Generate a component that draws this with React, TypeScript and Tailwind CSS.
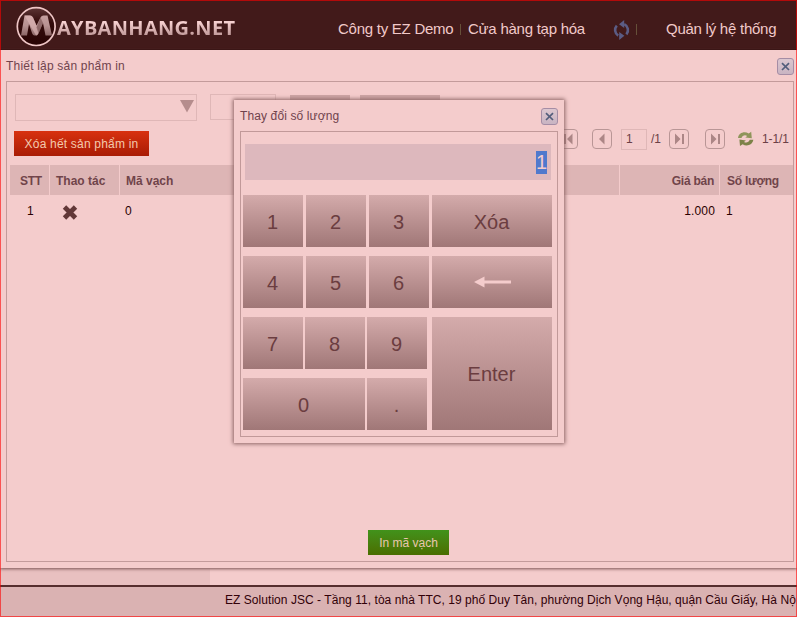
import React from "react";

function CloseButton() {
  return (
    <button className="flex h-[17px] w-[17px] items-center justify-center rounded-[3px] border border-[#a58da5] bg-gradient-to-b from-[#dcc6cf] to-[#c9b4c2]">
      <svg width="9" height="9" viewBox="0 0 9 9">
        <path d="M1 1.200 8 8M8 1.200 1 8" stroke="#535d7b" strokeWidth="1.7" />
      </svg>
    </button>
  );
}

function PagerButton({ kind, className = "" }: { kind: "first" | "prev" | "next" | "last"; className?: string }) {
  return (
    <button className={`flex h-5 w-5 shrink-0 items-center justify-center rounded-[4px] border border-[#b99696] ${className}`}>
      <svg width="18" height="18" viewBox="0 0 18 18" fill="#ac8686">
        {kind === "first" && <path d="M5 4h2v10H5zM8 9l5.500-5.500v11z" />}
        {kind === "prev" && <path d="M6 9l5.500-5.500v11z" />}
        {(kind === "next" || kind === "last") && <path d="M10.500 9 5 3.500v11zM12 4h2v10h-2z" />}
      </svg>
    </button>
  );
}

function Logo() {
  return (
    <div className="flex h-[44px] items-center">
      <svg width="42" height="42" viewBox="0 0 42 42" className="shrink-0">
        <defs>
          <linearGradient id="metal" x1="0" y1="0" x2="0" y2="1">
            <stop offset="0" stopColor="#c49e9e" />
            <stop offset="0.5" stopColor="#b89292" />
            <stop offset="1" stopColor="#8c6666" />
          </linearGradient>
          <linearGradient id="disc" x1="0" y1="0" x2="0" y2="1">
            <stop offset="0" stopColor="#5c3434" />
            <stop offset="0.4" stopColor="#330b0b" />
            <stop offset="1" stopColor="#280303" />
          </linearGradient>
        </defs>
        <circle cx="21.2" cy="20.6" r="18.9" fill="url(#disc)" stroke="#efc6c6" strokeWidth="1.7" />
        <path d="M6 29.500 9.500 9.500h5.500q2 0 3 2l3.500 8 4-8q1-2 3-2h4L37 29.500h-6.500L28 17l-4.500 10.500q-.8 2-2.500 2h-1.500q-1.500 0-2.300-2L14 18l-2 11.500z" fill="url(#metal)" />
        <path d="M9.500 9.500H15q2 0 3 2l6 14-1 2.500q-.8 1.500-2 1.500z" fill="#dbb3b3" opacity="0.65" />
        <path d="M28 17l-4.500 10.500-2-6 4-10z" fill="#765050" opacity="0.6" />
      </svg>
      <span className="mt-[3px] whitespace-nowrap bg-gradient-to-b from-[#f6d0d0] from-30% to-[#c29b9b] to-75% bg-clip-text font-['Open_Sans'] text-[20px] font-bold leading-[28px] tracking-[.3px] text-transparent">
        AYBANHANG.NET
      </span>
    </div>
  );
}

function Header() {
  return (
    <header className="flex h-[50px] shrink-0 items-center border-b border-[#300b0b] bg-[#421a1a] pl-[15px] text-[15px] text-[#f1c9c9]">
      <div className="mt-[4px] w-[323px]"><Logo /></div>
      <nav className="mt-[9px] flex items-center whitespace-nowrap tracking-[-.25px]">
        <span className="w-[122px]">Công ty EZ Demo</span>
        <span className="h-[11px] w-[8px] border-l border-[#665039]" />
        <span className="w-[145px]">Cửa hàng tạp hóa</span>
        <svg width="18" height="20" viewBox="0 0 18 20" className="mt-[2px]">
          <g fill="none" stroke="#5b5c84" strokeWidth="2.6">
            <path d="M5.200 15.600A6.600 6.600 0 0 1 3.800 5.600" />
            <path d="M11.200 4.200A6.600 6.600 0 0 1 13.400 14.400" />
          </g>
          <path d="M11.200 0v8L6 4.200zM6.200 20v-8l5.200 3.800z" fill="#5b5c84" />
        </svg>
        <span className="ml-[5px] h-[11px] w-[30px] border-l border-[#665039]" />
        <span>Quản lý hệ thống</span>
      </nav>
    </header>
  );
}

function FilterRow() {
  return (
    <div className="flex h-[27px] items-start">
      <div className="flex h-[27px] w-[182px] justify-end border border-[#dfb7b7] pr-[2px] pt-[5px]">
        <svg width="14" height="13"><path d="M0 0h14L7 12.500z" fill="#b58d8d" /></svg>
      </div>
      <div className="ml-[13px] h-[26px] w-[66px] border border-[#dfb7b7]" />
      <div className="ml-[14px] mt-px h-[25px] w-[60px] bg-[#cda5a5]" />
      <div className="ml-[10px] mt-px h-[25px] w-[80px] bg-[#cda5a5]" />
    </div>
  );
}

function Toolbar() {
  return (
    <div className="mt-[7px] flex h-[28px] items-start text-[12px] text-[#6b3f46]">
      <button className="-ml-px mt-[3px] h-[25px] w-[135px] whitespace-nowrap bg-gradient-to-b from-[#d8310f] to-[#a91b05] text-[12px] tracking-[.2px] text-[#f3c9ad]">
        Xóa hết sản phẩm in
      </button>
      <div className="ml-[409px] mt-px flex h-5 items-center">
        <PagerButton kind="first" />
        <PagerButton kind="prev" className="ml-[14px]" />
        <div className="ml-[9px] h-[21px] w-[26px] border border-[#dfb7b7] pl-[4px] leading-[19px]">1</div>
        <span className="ml-[4px] w-[18px]">/1</span>
        <PagerButton kind="next" />
        <PagerButton kind="last" className="ml-4" />
        <svg width="17" height="16" viewBox="0 0 17 16" className="ml-[12px]">
          <path d="M1 7C1.500 2 7.500-.3 11.700 2.600L14.200.8l.6 6.400-6.500-.8 1.900-1.500C7.700 3.500 5.500 4.500 4.500 7z" fill="#8f955b" />
          <path d="M16.300 8.800c-.5 5-6.500 7.300-10.700 4.400L3 15 2.400 8.600l6.500.8L7 11c2.500 1.300 4.700.3 5.700-2.200z" fill="#7c8248" />
        </svg>
        <span className="ml-[8px] tracking-[-.1px]">1-1/1</span>
      </div>
    </div>
  );
}

function ProductTable() {
  return (
    <div className="-ml-[5px] mt-[9px] text-[12px]">
      <div className="flex h-[30px] items-center gap-px whitespace-nowrap font-bold leading-[32px] text-[#70444a]">
        <div className="h-full w-[39px] bg-[#ddb5b5] pl-[10px] tracking-[-.3px]">STT</div>
        <div className="h-full w-[69px] bg-[#ddb5b5] pl-[6px]">Thao tác</div>
        <div className="h-full w-[499px] bg-[#ddb5b5] pl-[6px]">Mã vạch</div>
        <div className="h-full w-[99px] bg-[#ddb5b5] pr-[5px] text-right tracking-[-.25px]">Giá bán</div>
        <div className="h-full w-[73px] bg-[#ddb5b5] pl-[7px] tracking-[-.25px]">Số lượng</div>
      </div>
      <div className="flex h-[32px] items-center text-[#2b0000]">
        <div className="w-[40px] pl-[17px]">1</div>
        <div className="w-[70px] pl-[12px]">
          <svg width="16" height="15" viewBox="0 0 16 15" className="mt-[3px]">
            <path d="M2.500 2 13.500 13M13.500 2 2.500 13" stroke="#623838" strokeWidth="4.8" />
          </svg>
        </div>
        <div className="w-[500px] pl-[5px]">0</div>
        <div className="w-[100px] pr-[5px] text-right tracking-[.15px]">1.000</div>
        <div className="pl-[6px]">1</div>
      </div>
    </div>
  );
}

function Key({ label, className = "" }: { label: React.ReactNode; className?: string }) {
  return (
    <button className={`flex h-[52px] w-[60px] items-center justify-center bg-gradient-to-b from-[#d4abab] to-[#a07777] pr-px pt-px text-[20px] text-[#6b3d40] ${className}`}>
      {label}
    </button>
  );
}

function QuantityDialog() {
  const arrow = (
    <svg width="38" height="12" className="ml-[2px] -mt-px"><path d="M0 6 10.500 .5v11zM10 4.500h27v3H10z" fill="#f4cccc" /></svg>
  );
  return (
    <section className="absolute left-[234px] top-[100px] h-[343px] w-[330px] bg-[#f4cccc] px-[6px] shadow-[0_0_4px_1px_#8b6363]">
      <div className="flex h-[31px] items-center justify-between text-[12px] text-[#70434c]">
        <span className="tracking-[.12px]">Thay đổi số lượng</span>
        <div className="mt-[2px]"><CloseButton /></div>
      </div>
      <div className="h-[306px] border border-[#c19999] px-[2px] pt-[12px]">
        <div className="ml-[2px] flex h-[36px] w-[306px] items-center justify-end bg-[#ddb8bd] pr-[4px] text-[20px] leading-[23px] text-[#f4cccc]">
          <span className="w-[11px] bg-[#5079cd]">1</span>
        </div>
        <div className="mt-[15px] flex gap-[3px]">
          <Key label="1" /><Key label="2" /><Key label="3" />
          <Key label="Xóa" className="w-[120px]!" />
        </div>
        <div className="mt-[9px] flex gap-[3px]">
          <Key label="4" /><Key label="5" /><Key label="6" />
          <Key label={arrow} className="w-[120px]!" />
        </div>
        <div className="mt-[9px] flex gap-[5px]">
          <div className="flex flex-col gap-[9px]">
            <div className="flex gap-[2px]"><Key label="7" /><Key label="8" /><Key label="9" /></div>
            <div className="flex gap-[2px]"><Key label="0" className="w-[122px]!" /><Key label="." /></div>
          </div>
          <Key label="Enter" className="h-[113px]! w-[120px]!" />
        </div>
      </div>
    </section>
  );
}

export default function App() {
  return (
    <div className="relative flex h-[617px] w-[797px] flex-col overflow-hidden bg-[#f4cccc] font-['Liberation_Sans',Arial,sans-serif]">
      <Header />
      <main className="z-10 h-[518px] shrink-0 bg-[#f4cccc] pl-[6px] pr-[3px] shadow-[0_1px_3px_#795151]">
        <div className="flex h-[31px] items-center justify-between text-[12px] text-[#70434c]">
          <span className="tracking-[.2px]">Thiết lập sản phẩm in</span>
          <div className="mt-[2px]"><CloseButton /></div>
        </div>
        <div className="flex h-[481px] flex-col border border-[#c39b9b] pl-[8px] pt-[12px]">
          <FilterRow />
          <Toolbar />
          <ProductTable />
          <button className="ml-[353px] mt-auto mb-[6px] h-[25px] w-[81px] whitespace-nowrap bg-gradient-to-b from-[#41921b] to-[#4a6e00] text-[12px] text-[#e9c6ad]">
            In mã vạch
          </button>
        </div>
      </main>
      <div className="h-[17px] w-[210px] shrink-0 bg-[#e8c0c0]" />
      <footer className="h-[32px] shrink-0 whitespace-nowrap border-t-2 border-[#562e2e] bg-[#dab2b2] pl-[225px] text-[12px] leading-[26px] tracking-[.045px] text-[#310008]">
        EZ Solution JSC - Tầng 11, tòa nhà TTC, 19 phố Duy Tân, phường Dịch Vọng Hậu, quận Cầu Giấy, Hà Nộ
      </footer>
      <div className="z-20"><QuantityDialog /></div>
      <div className="pointer-events-none absolute inset-0 z-30 border border-[#ff0000]/60" />
    </div>
  );
}
